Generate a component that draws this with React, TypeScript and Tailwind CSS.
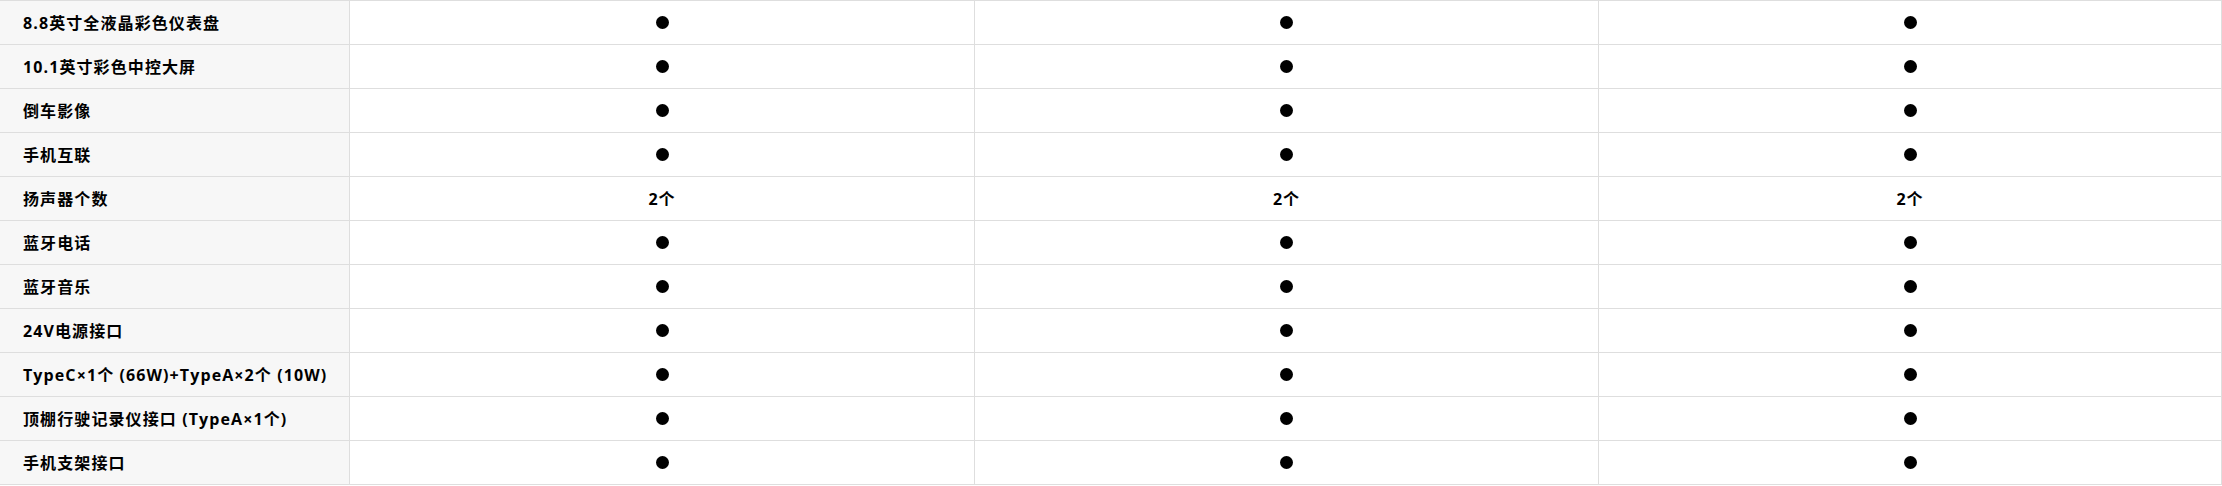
const rows: { label: string; value?: string }[] = [
  { label: '8.8英寸全液晶彩色仪表盘' },
  { label: '10.1英寸彩色中控大屏' },
  { label: '倒车影像' },
  { label: '手机互联' },
  { label: '扬声器个数', value: '2个' },
  { label: '蓝牙电话' },
  { label: '蓝牙音乐' },
  { label: '24V电源接口' },
  { label: 'TypeC×1个 (66W)+TypeA×2个 (10W)' },
  { label: '顶棚行驶记录仪接口 (TypeA×1个)' },
  { label: '手机支架接口' },
]

function Cell({ value, width }: { value?: string; width: string }) {
  return (
    <div className={`${width} flex h-full items-center justify-center border-r border-[#dedede]`}>
      {value ? (
        <span className="text-[16px] font-bold tracking-[1px] text-black">{value}</span>
      ) : (
        <span className="block h-[13px] w-[13px] rounded-full bg-black" />
      )}
    </div>
  )
}

export default function App() {
  return (
    <div
      className="w-[2222px] bg-white"
      style={{ fontFamily: '"Open Sans", "Noto Sans CJK SC", sans-serif' }}
    >
      <div className="border-b border-[#dedede]">
        {rows.map((row) => (
          <div key={row.label} className="flex h-[44px] border-t border-[#dedede]">
            <div className="flex h-full w-[350px] items-center border-r border-[#dedede] bg-[#f7f7f7] pl-[23px]">
              <span className="whitespace-nowrap text-[16px] font-bold tracking-[1.1px] text-black">
                {row.label}
              </span>
            </div>
            <Cell value={row.value} width="w-[625px]" />
            <Cell value={row.value} width="w-[624px]" />
            <Cell value={row.value} width="w-[623px]" />
          </div>
        ))}
      </div>
    </div>
  )
}
